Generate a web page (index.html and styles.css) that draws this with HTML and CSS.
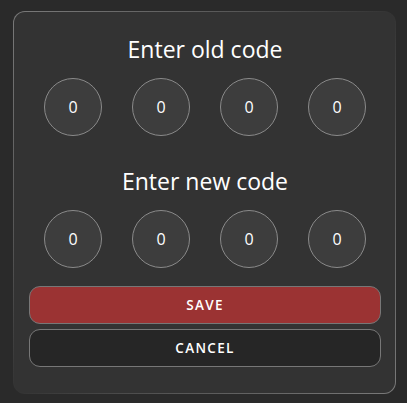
FILE: index.html
```html
<!DOCTYPE html>
<html>
<head>
<meta charset="utf-8">
<link rel="stylesheet" href="styles.css">
</head>
<body>
<div class="card">
  <h2 class="title">Enter old code</h2>
  <div class="digits">
    <div class="digit">0</div>
    <div class="digit">0</div>
    <div class="digit">0</div>
    <div class="digit">0</div>
  </div>
  <h2 class="title title-new">Enter new code</h2>
  <div class="digits">
    <div class="digit">0</div>
    <div class="digit">0</div>
    <div class="digit">0</div>
    <div class="digit">0</div>
  </div>
  <div class="actions">
    <button class="btn btn-save">SAVE</button>
    <button class="btn btn-cancel">CANCEL</button>
  </div>
</div>
</body>
</html>
```
FILE: styles.css
```css
html, body {
  margin: 0;
  padding: 0;
  background: #2a2a2a;
}
body {
  padding: 11px 11px 9px 13px;
  font-family: "Open Sans", "DejaVu Sans", sans-serif;
  color: #fff;
}
.card {
  box-sizing: border-box;
  width: 383px;
  height: 383px;
  border-radius: 12px;
  border: 1px solid transparent;
  background:
    linear-gradient(#333333, #333333) padding-box,
    linear-gradient(135deg, #7a7a7a 0%, #555 30%, #333 50%, #555 70%, #7a7a7a 100%) border-box;
  padding: 22px 14px 26px 15px;
  display: flex;
  flex-direction: column;
}
.title {
  margin: 0;
  font-weight: 400;
  font-size: 23px;
  line-height: 30px;
  text-align: center;
}
.title-new {
  margin-top: 30px;
}
.digits {
  display: flex;
  justify-content: center;
  gap: 30px;
  margin-top: 14px;
}
.digit {
  box-sizing: border-box;
  width: 58px;
  height: 58px;
  border-radius: 50%;
  border: 1px solid #8a8a8a;
  background: #3d3d3d;
  display: flex;
  align-items: center;
  justify-content: center;
  font-size: 16px;
}
.actions {
  margin-top: auto;
  display: flex;
  flex-direction: column;
  gap: 5px;
}
.btn {
  box-sizing: border-box;
  height: 38px;
  border-radius: 11px;
  border: 1px solid #777;
  font-family: "Open Sans", "DejaVu Sans", sans-serif;
  font-size: 13.5px;
  font-weight: 600;
  letter-spacing: 1.3px;
  color: #fff;
}
.btn-save {
  background: #9b3333;
}
.btn-cancel {
  background: #262626;
}
```
